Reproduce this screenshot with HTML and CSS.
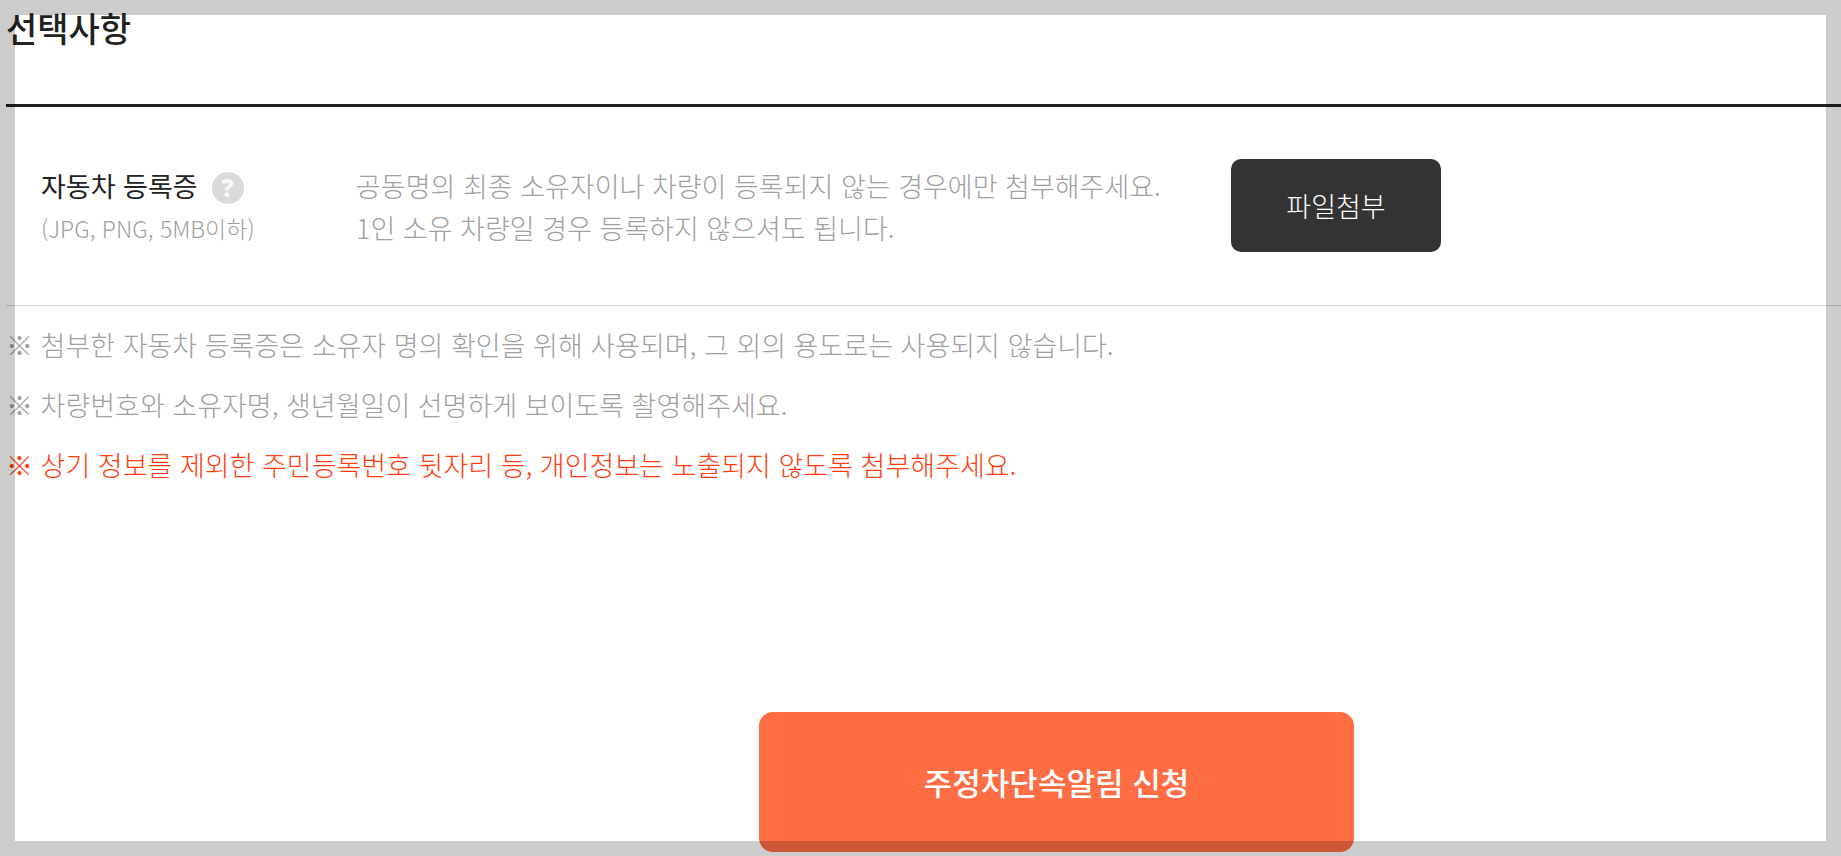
FILE: index.html
```
<!DOCTYPE html>
<html lang="ko">
<head>
    <meta charset="UTF-8">
    <meta name="viewport" content="width=device-width, initial-scale=1.0">
    <title>주정차단속알림 신청</title>
    <link rel="stylesheet" href="styles.css">
</head>
<body>
    <form class="container">
        <h2 class="title">선택사항</h2>

        <!-- File attach -->
        <div class="file-row">
            <div class="file-label">
                <div class="label-line">
                    <span id="file-name">자동차 등록증</span>
                    <button type="button" class="help" aria-label="도움말">?</button>
                </div>
                <p class="file-type">(JPG, PNG, 5MB이하)</p>
            </div>
            <p class="file-desc">공동명의 최종 소유자이나 차량이 등록되지 않는 경우에만 첨부해주세요.<br>1인 소유 차량일 경우 등록하지 않으셔도 됩니다.</p>
            <button type="button" class="btn-file" aria-describedby="file-name">파일첨부</button>
        </div>

        <!-- Notes -->
        <ul class="notes">
            <li>※ 첨부한 자동차 등록증은 소유자 명의 확인을 위해 사용되며, 그 외의 용도로는 사용되지 않습니다.</li>
            <li>※ 차량번호와 소유자명, 생년월일이 선명하게 보이도록 촬영해주세요.</li>
            <li class="warning">※ 상기 정보를 제외한 주민등록번호 뒷자리 등, 개인정보는 노출되지 않도록 첨부해주세요.</li>
        </ul>

        <div class="submit-area">
            <button type="submit" class="btn-submit">주정차단속알림 신청</button>
        </div>
    </form>
    <div class="frame"></div>
</body>
</html>
```

FILE: styles.css
```
* {
    box-sizing: border-box;
}
body {
    font-family: "Noto Sans CJK KR", sans-serif;
    font-size: 27px;
    font-weight: 300;
    line-height: 42px;
    margin: 0;
    background-color: #fff;
    color: #222;
}
h2, p, ul {
    margin: 0;
    padding: 0;
}
button {
    font-family: inherit;
    padding: 0;
    border: none;
    cursor: pointer;
}
.container {
    margin-left: 6px;
}
.title {
    font-size: 34px;
    font-weight: 500;
    line-height: 56px;
    padding-bottom: 48px;
}
.file-row {
    display: flex;
    align-items: center;
    border-top: 3px solid #222;
    border-bottom: 1px solid #d5d5d5;
    padding: 52px 35px 53px;
}
.file-label {
    width: 315px;
    padding-top: 2px;
}
.label-line {
    display: flex;
    align-items: center;
    gap: 14px;
    font-weight: 400;
}
.help {
    width: 32px;
    height: 32px;
    margin-top: 4px;
    border-radius: 50%;
    background-color: #dadada;
    color: #f8f8f8;
    font-family: "Open Sans", sans-serif;
    font-size: 24px;
    font-weight: 800;
    line-height: 32px;
}
.file-type {
    font-size: 23px;
    color: #a0a0a0;
}
.file-desc {
    width: 875px;
    padding-top: 2px;
    color: #a0a0a0;
}
.btn-file {
    width: 210px;
    height: 93px;
    border-radius: 10px;
    background-color: #333;
    color: #fff;
    font-size: 27px;
    font-weight: 300;
}
.notes {
    list-style: none;
    padding-top: 9px;
    line-height: 60px;
    color: #a0a0a0;
}
.notes .warning {
    color: #ff3d12;
}
.submit-area {
    padding-top: 217px;
    padding-left: 266px;
    text-align: center;
}
.btn-submit {
    width: 595px;
    height: 140px;
    padding-bottom: 2px;
    border-radius: 14px;
    background-color: #ff6d45;
    color: #fff;
    font-size: 31px;
    font-weight: 500;
}
/* translucent border over the whole window */
.frame {
    position: fixed;
    inset: 0;
    border: 15px solid rgba(0, 0, 0, 0.2);
    pointer-events: none;
}
```
